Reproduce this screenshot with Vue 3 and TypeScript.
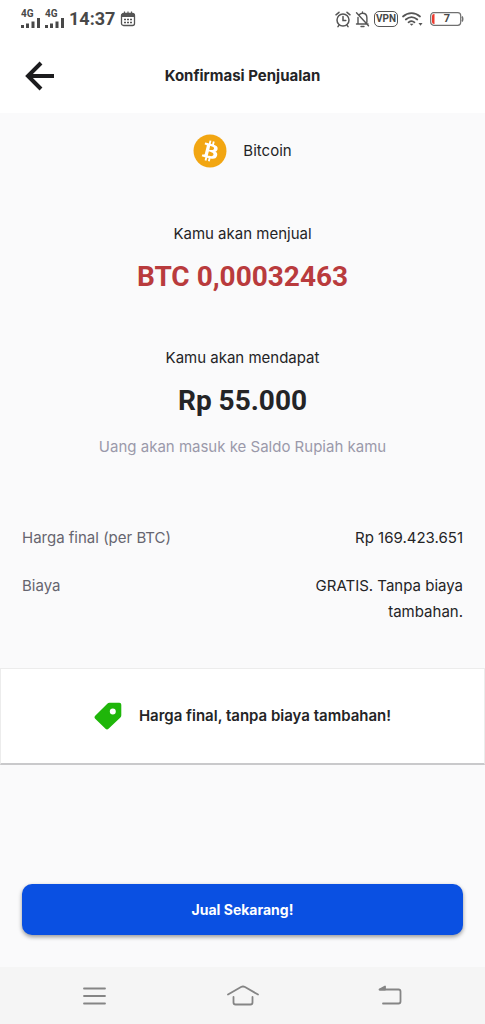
<script setup lang="ts">
interface Row {
  label: string
  value: string
}

const rows: Row[] = [
  { label: 'Harga final (per BTC)', value: 'Rp 169.423.651' },
  { label: 'Biaya', value: 'GRATIS. Tanpa biaya tambahan.' },
]
const signals: string[] = ['4G', '4G']
</script>

<template>
  <div class="screen">
    <div class="status">
      <div class="status-group">
        <span v-for="(s, i) in signals" :key="i" class="signal">
          <span class="signal-type">{{ s }}</span>
          <svg width="19" height="10" viewBox="0 0 19 10" fill="#484848" aria-hidden="true">
            <path d="M0 7h3v3H0zM5 5.500h3V10H5zM10.500 3.500h3V10h-3zM16 0h3v10h-3z" />
          </svg>
        </span>
        <span class="clock">14:37</span>
        <svg width="16" height="16" viewBox="0 0 16 16" fill="none" stroke="#555" aria-hidden="true">
          <rect x="1.500" y="2.500" width="13" height="12" rx="2" stroke-width="1.300" />
          <path d="M1.500 4.500h13" stroke-width="3" />
          <path d="M4.500 .5v3M8 .5v3M11.500 .5v3" stroke-width="1.200" />
          <path d="M4 8.500h2M7 8.500h2M10 8.500h2M4 11.500h2M7 11.500h2M10 11.500h2" stroke-width="1.700" />
        </svg>
      </div>
      <div class="status-group status-right">
        <svg width="16" height="17" viewBox="0 0 16 17" fill="none" stroke="#555" stroke-width="1.500" stroke-linecap="round" aria-hidden="true">
          <circle cx="8" cy="9" r="6" />
          <path d="M8 5.500V9.500h2.800M1 3.800 4 1.300M15 3.800 12 1.300M4 14.200l-1 1.500M12 14.200l1 1.500" />
        </svg>
        <svg width="15" height="17" viewBox="0 0 15 17" fill="none" stroke="#555" stroke-width="1.400" stroke-linecap="round" stroke-linejoin="round" aria-hidden="true">
          <path d="M3 6.500V13H1.500h11.500M4.500 3.500C5.300 2.600 6.300 2.200 7.500 2.200c2.700 0 4.400 2 4.400 4.500v4.500M7.500 1v1M1.500 1.800l12 13M6 15.500h3" />
        </svg>
        <span class="vpn">VPN</span>
        <svg width="21" height="16" viewBox="0 0 21 16" fill="none" stroke="#555" stroke-width="1.700" stroke-linecap="round" aria-hidden="true">
          <path d="M1 5.500c5-4.500 12-4.500 17 0M3.800 8.500c3.500-3 8-3 11.500 0M6.500 11.300c2-1.600 4.200-1.600 6 0" />
          <path d="M7.600 12.800h4l-2 2z" fill="#555" stroke="none" />
          <path d="M16.500 12h4l-2 2.800z" fill="#555" stroke="none" />
        </svg>
        <span class="battery">
          <svg width="34" height="14" viewBox="0 0 34 14" fill="none" aria-hidden="true">
            <rect x=".7" y=".7" width="30" height="12.600" rx="3" stroke="#707070" stroke-width="1.200" />
            <path d="M32 4.500q1.500 2.500 0 5" stroke="#707070" stroke-width="1.500" />
            <path d="M4.500 2v10H4Q2 12 2 10V4q0-2 2-2z" fill="#ed3b2f" />
          </svg>
          <span class="battery-level">7</span>
        </span>
      </div>
    </div>

    <header class="header">
      <button class="back" type="button" aria-label="Kembali">
        <svg width="30" height="30" viewBox="0 0 30 30" fill="none" stroke="#1c1c1e" stroke-width="4" aria-hidden="true">
          <path d="M29 15H3M16 2 3 15l13 13" />
        </svg>
      </button>
      <h1 class="title">Konfirmasi Penjualan</h1>
    </header>

    <main class="content">
      <div class="coin">
        <svg width="34" height="34" viewBox="0 0 32 32" aria-hidden="true">
          <circle cx="16" cy="16" r="15.500" fill="#f2a612" />
          <path fill="#fff" d="M23.189 14.020c.314-2.096-1.283-3.223-3.465-3.975l.708-2.840-1.728-.43-.69 2.765c-.454-.114-.920-.220-1.385-.326l.695-2.783L15.596 6l-.708 2.839c-.376-.086-.746-.170-1.104-.260l.002-.009-2.384-.595-.460 1.846s1.283.294 1.256.312c.700.175.826.638.805 1.006l-.806 3.235c.048.012.110.030.180.057l-.183-.045-1.130 4.532c-.086.212-.303.531-.793.410.018.025-1.256-.313-1.256-.313l-.858 1.978 2.250.561c.418.105.828.215 1.231.318l-.715 2.872 1.727.430.708-2.840c.472.127.930.245 1.378.357l-.706 2.828 1.728.430.715-2.866c2.948.558 5.164.333 6.097-2.333.752-2.146-.037-3.385-1.588-4.192 1.130-.260 1.980-1.003 2.207-2.538zm-3.950 5.538c-.533 2.147-4.148.986-5.320.695l.950-3.805c1.172.293 4.929.872 4.370 3.110zm.535-5.569c-.487 1.953-3.495.960-4.470.717l.860-3.450c.975.243 4.118.696 3.610 2.733z" />
        </svg>
        <span>Bitcoin</span>
      </div>

      <section class="block">
        <p class="caption">Kamu akan menjual</p>
        <p class="amount sell">BTC 0,00032463</p>
      </section>

      <section class="block">
        <p class="caption">Kamu akan mendapat</p>
        <p class="amount">Rp 55.000</p>
        <p class="note">Uang akan masuk ke Saldo Rupiah kamu</p>
      </section>

      <dl class="details">
        <div v-for="row in rows" :key="row.label" class="row">
          <dt>{{ row.label }}</dt>
          <dd>{{ row.value }}</dd>
        </div>
      </dl>

      <div class="banner">
        <svg width="28" height="28" viewBox="0 0 28 28" aria-hidden="true">
          <path fill="#1fb60a" fill-rule="evenodd" d="M15.500.8h9.800Q27.300.8 27.300 2.800v10.500q0 1.200-.9 2.100L14.500 26.800q-1.500 1.300-3 0L1.200 16.800q-1.400-1.500 0-3L13.300 1.700q.9-.9 2.200-.9zM18.800 6.400a3 3 0 1 0 .01 6a3 3 0 1 0-.01-6z" />
        </svg>
        <span>Harga final, tanpa biaya tambahan!</span>
      </div>

      <div class="action">
        <button class="sell-button" type="button">Jual Sekarang!</button>
      </div>
    </main>

    <nav class="system-nav" aria-label="Navigasi sistem">
      <button type="button" aria-label="Menu">
        <svg width="34" height="24" viewBox="0 0 34 24" fill="none" stroke="#858585" stroke-width="1.800" stroke-linecap="round" aria-hidden="true">
          <path d="M7 4.500h21M7 12h21M7 19.500h21" />
        </svg>
      </button>
      <button type="button" aria-label="Beranda">
        <svg width="34" height="24" viewBox="0 0 34 24" fill="none" stroke="#858585" stroke-width="1.800" stroke-linecap="round" stroke-linejoin="round" aria-hidden="true">
          <path d="M2 10.500 15 3q2-1 4 0l13 7.500M7.500 13v5.500q0 2 2 2h15q2 0 2-2V13" />
        </svg>
      </button>
      <button type="button" aria-label="Kembali ke layar sebelumnya">
        <svg width="34" height="24" viewBox="0 0 34 24" fill="none" stroke="#858585" stroke-width="1.800" stroke-linecap="round" stroke-linejoin="round" aria-hidden="true">
          <path d="M6 5.500h18.500q2 0 2 2v10q0 2-2 2H9" />
          <path d="M5.500 5.500 11 2.500v3z" fill="#858585" />
        </svg>
      </button>
    </nav>
  </div>
</template>

<style>
body {
  margin: 0;
  background: #fafafb;
}
</style>

<style scoped>
.screen {
  display: flex;
  flex-direction: column;
  min-height: 100vh;
  font-family: Inter, "Liberation Sans", sans-serif;
  font-size: 15px;
  line-height: 26px;
  color: #242426;
}

button {
  border: 0;
  padding: 0;
  background: none;
  font: inherit;
  color: inherit;
  cursor: pointer;
}

.status {
  display: flex;
  justify-content: space-between;
  align-items: center;
  height: 38px;
  padding: 0 21px;
  background: #fff;
  font-family: Roboto, sans-serif;
  color: #484848;
}

.status-group {
  display: flex;
  align-items: center;
  gap: 5px;
}

.status-right {
  gap: 4px;
}

.signal {
  display: flex;
  flex-direction: column;
  height: 18px;
}

.signal-type {
  font-size: 10px;
  line-height: 8px;
  font-weight: 700;
}

.clock {
  font-size: 18px;
  line-height: 22px;
  font-weight: 700;
}

.vpn {
  border: 1px solid #555;
  border-radius: 5px;
  padding: 1px;
  font-size: 10px;
  line-height: 12px;
  font-weight: 700;
}

.battery {
  display: grid;
  align-items: center;
  margin-left: 3px;
}

.battery > * {
  grid-area: 1 / 1;
}

.battery-level {
  text-align: center;
  font-size: 11px;
  line-height: 14px;
  font-weight: 700;
}

.header {
  display: grid;
  grid-template-columns: 30px 1fr 30px;
  align-items: center;
  height: 75px;
  padding: 0 25px;
  background: #fff;
}

.back {
  display: flex;
}

.title {
  margin: 0;
  text-align: center;
  font-size: 15px;
  line-height: 24px;
  font-weight: 700;
}

.content {
  flex: 1;
  display: flex;
  flex-direction: column;
}

.coin {
  display: flex;
  justify-content: center;
  align-items: center;
  gap: 16px;
  padding-top: 21px;
}

.block {
  padding-top: 53px;
  text-align: center;
}

.block + .block {
  padding-top: 50px;
}

.caption,
.amount,
.note {
  margin: 0;
}

.amount {
  margin-top: 12px;
  font-family: Roboto, "Liberation Sans", sans-serif;
  font-size: 28px;
  line-height: 36px;
  font-weight: 700;
}

.sell {
  color: #b93b3d;
}

.note {
  margin-top: 15px;
  color: #9a99aa;
}

.details {
  display: flex;
  flex-direction: column;
  gap: 22px;
  margin: 65px 22px 43px;
}

.row {
  display: flex;
  justify-content: space-between;
  gap: 20px;
}

.row dt {
  color: #66656f;
}

.row dd {
  margin: 0;
  max-width: 40%;
  text-align: right;
}

.banner {
  display: flex;
  justify-content: center;
  align-items: center;
  gap: 17px;
  padding: 33px 20px;
  background: #fff;
  border: 1px solid #ececec;
  border-bottom: 2px solid #c9c9cb;
  font-weight: 600;
}

.action {
  margin-top: auto;
  padding: 32px 22px;
}

.sell-button {
  display: block;
  width: 100%;
  height: 51px;
  border-radius: 10px;
  background: #0a50e2;
  box-shadow: 0 2px 4px rgba(0, 0, 0, 0.4);
  color: #fff;
  font-size: 14px;
  font-weight: 700;
}

.system-nav {
  display: flex;
  justify-content: space-between;
  align-items: center;
  height: 57px;
  padding: 0 77px;
  background: #f5f5f5;
}

.system-nav button {
  display: flex;
}
</style>
